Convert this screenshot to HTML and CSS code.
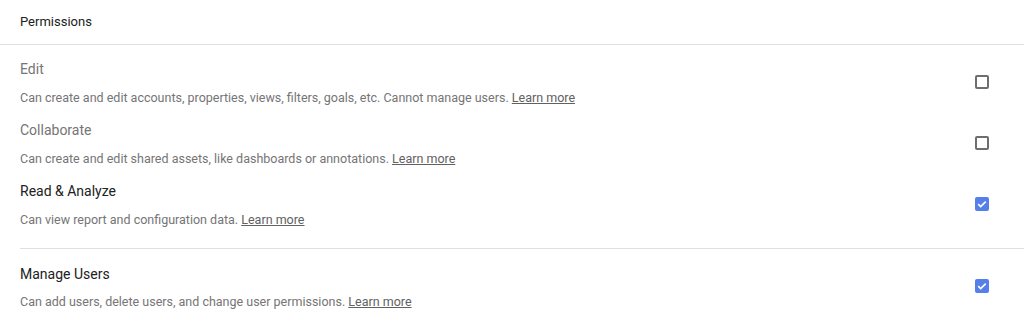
FILE: index.html
```html
<!DOCTYPE html>
<html lang="en">
<head>
  <meta charset="UTF-8" />
  <title>Permissions</title>
  <link rel="stylesheet" href="styles.css">
</head>
<body>
  <div class="panel">
    <div class="panel-header">Permissions</div>

    <div class="group">
      <div class="perm">
        <div class="perm-text">
          <div class="perm-title muted">Edit</div>
          <div class="perm-desc">Can create and edit accounts, properties, views, filters, goals, etc. Cannot manage users. <a href="#">Learn more</a></div>
        </div>
        <span class="check"></span>
      </div>

      <div class="perm">
        <div class="perm-text">
          <div class="perm-title muted">Collaborate</div>
          <div class="perm-desc">Can create and edit shared assets, like dashboards or annotations. <a href="#">Learn more</a></div>
        </div>
        <span class="check"></span>
      </div>

      <div class="perm">
        <div class="perm-text">
          <div class="perm-title">Read &amp; Analyze</div>
          <div class="perm-desc">Can view report and configuration data. <a href="#">Learn more</a></div>
        </div>
        <span class="check checked">
          <svg viewBox="0 0 14 14" width="14" height="14"><path d="M3.2 7.2l2.5 2.4 5-5" fill="none" stroke="#fff" stroke-width="1.6"/></svg>
        </span>
      </div>
    </div>

    <div class="group group-last">
      <div class="perm">
        <div class="perm-text">
          <div class="perm-title">Manage Users</div>
          <div class="perm-desc">Can add users, delete users, and change user permissions. <a href="#">Learn more</a></div>
        </div>
        <span class="check checked">
          <svg viewBox="0 0 14 14" width="14" height="14"><path d="M3.2 7.2l2.5 2.4 5-5" fill="none" stroke="#fff" stroke-width="1.6"/></svg>
        </span>
      </div>
    </div>
  </div>
</body>
</html>
```

FILE: styles.css
```css
body {
  margin: 0;
  background: #fff;
  font-family: Roboto, 'Liberation Sans', sans-serif;
  color: #212121;
}

.panel {
  width: 1024px;
}

.panel-header {
  height: 44px;
  line-height: 44px;
  padding: 0 20px;
  font-size: 13px;
  color: #212121;
  border-bottom: 1px solid #e0e0e0;
}

.group {
  padding-bottom: 20px;
}

.group-last {
  margin-left: 20px;
  border-top: 1px solid #e0e0e0;
}

.group-last .perm {
  padding-left: 0;
  padding-top: 15px;
}

.group-last .perm-desc {
  margin-top: 10px;
}

.perm {
  display: flex;
  align-items: center;
  padding: 14px 35px 0 20px;
}

.perm-text {
  flex: 1;
}

.perm-title {
  font-size: 14px;
  line-height: 20px;
  color: #212121;
}

.perm-title.muted {
  color: #757575;
}

.perm-desc {
  margin-top: 11px;
  font-size: 12.5px;
  line-height: 16px;
  color: #757575;
}

.perm-desc a {
  color: #616161;
  text-decoration: underline;
}

.check {
  width: 14px;
  height: 14px;
  margin-top: -2px;
  box-sizing: border-box;
  border: 2px solid #6e6e6e;
  border-radius: 2px;
  display: flex;
}

.check.checked {
  border: none;
  background: #5680e9;
}
```
